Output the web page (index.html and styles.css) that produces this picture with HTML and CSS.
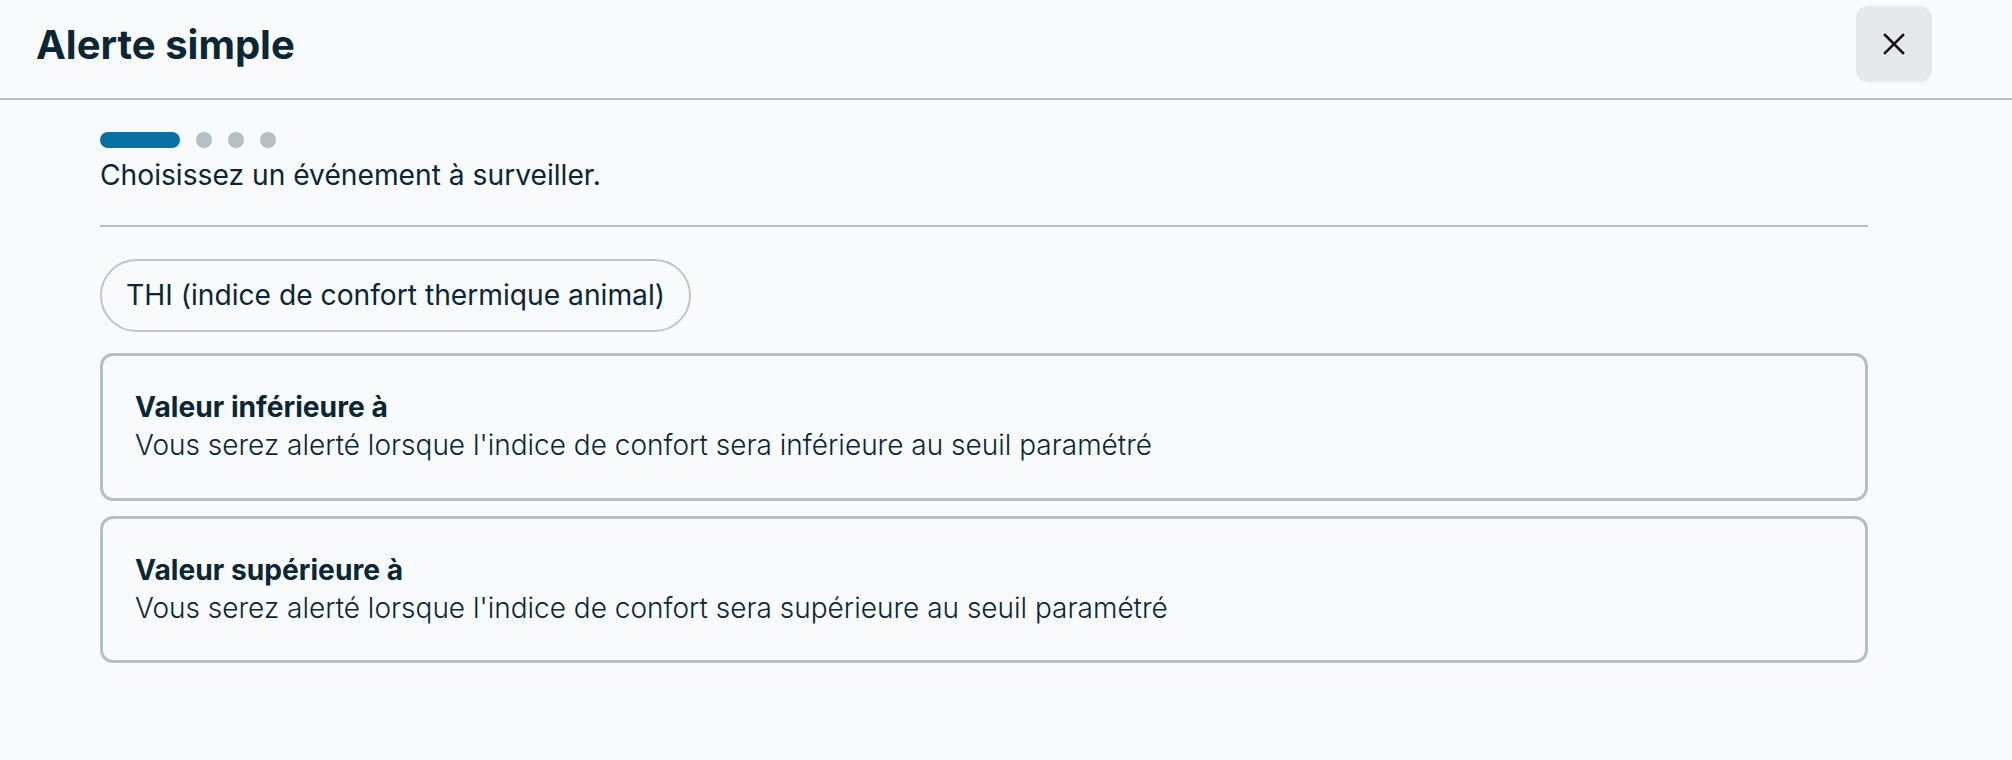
FILE: index.html
```html
<!DOCTYPE html>
<html lang="fr">
<head>
<meta charset="utf-8">
<title>Alerte simple</title>
<link rel="stylesheet" href="styles.css">
</head>
<body>
<div class="modal">
  <header class="modal-header">
    <h1 class="modal-title">Alerte simple</h1>
    <button class="close-btn" aria-label="Fermer">
      <svg width="22" height="22" viewBox="0 0 22 22" fill="none" stroke="#111" stroke-width="2.6" stroke-linecap="square">
        <path d="M2 2 L20 20 M20 2 L2 20"/>
      </svg>
    </button>
  </header>
  <main class="modal-body">
    <section class="step-head">
      <div class="stepper">
        <span class="step step-active"></span>
        <span class="step"></span>
        <span class="step"></span>
        <span class="step"></span>
      </div>
      <p class="step-text">Choisissez un événement à surveiller.</p>
    </section>
    <div class="chips">
      <span class="chip">THI (indice de confort thermique animal)</span>
    </div>
    <div class="options">
      <div class="option">
        <div class="option-title">Valeur inférieure à</div>
        <div class="option-desc">Vous serez alerté lorsque l'indice de confort sera inférieure au seuil paramétré</div>
      </div>
      <div class="option">
        <div class="option-title">Valeur supérieure à</div>
        <div class="option-desc">Vous serez alerté lorsque l'indice de confort sera supérieure au seuil paramétré</div>
      </div>
    </div>
  </main>
</div>
</body>
</html>
```

FILE: styles.css
```css
* { box-sizing: border-box; }
html, body {
  margin: 0;
  padding: 0;
  background: #f8fafc;
}
body {
  font-family: Inter, "Noto Sans", sans-serif;
  color: #0b2634;
  font-size: 28.2px;
  line-height: 38.4px;
}
.modal {
  width: 2012px;
  height: 760px;
}
.modal-header {
  display: flex;
  align-items: center;
  justify-content: space-between;
  padding: 6px 80px 16px 36px;
  border-bottom: 2px solid #b5c0c4;
}
.modal-title {
  margin: 0;
  font-size: 40px;
  font-weight: 700;
  line-height: normal;
  color: #0b2634;
}
.close-btn {
  width: 76px;
  height: 76px;
  border: none;
  border-radius: 12px;
  background: #e6e9eb;
  display: flex;
  align-items: center;
  justify-content: center;
  padding: 0;
}
.modal-body {
  padding: 32px 144px 0 100px;
}
.step-head {
  border-bottom: 2px solid #b5c0c4;
  padding-bottom: 31px;
}
.stepper {
  display: flex;
  gap: 16px;
  height: 16px;
}
.step {
  width: 16px;
  height: 16px;
  border-radius: 8px;
  background: #b5c0c4;
}
.step-active {
  width: 80px;
  background: #0a70a3;
}
.step-text {
  margin: 8px 0 0;
}
.chips {
  display: flex;
  margin-top: 32px;
}
.chip {
  border: 2px solid #bcc6ca;
  border-radius: 40px;
  padding: 15px 24px;
}
.options {
  display: flex;
  flex-direction: column;
  gap: 15px;
  margin-top: 21px;
}
.option {
  border: 3px solid #b5c0c4;
  border-radius: 13px;
  padding: 32px 32px 33px;
}
.option-title {
  font-weight: 700;
}
.option-desc {
  font-size: 28px;
  font-weight: 300;
}
```
